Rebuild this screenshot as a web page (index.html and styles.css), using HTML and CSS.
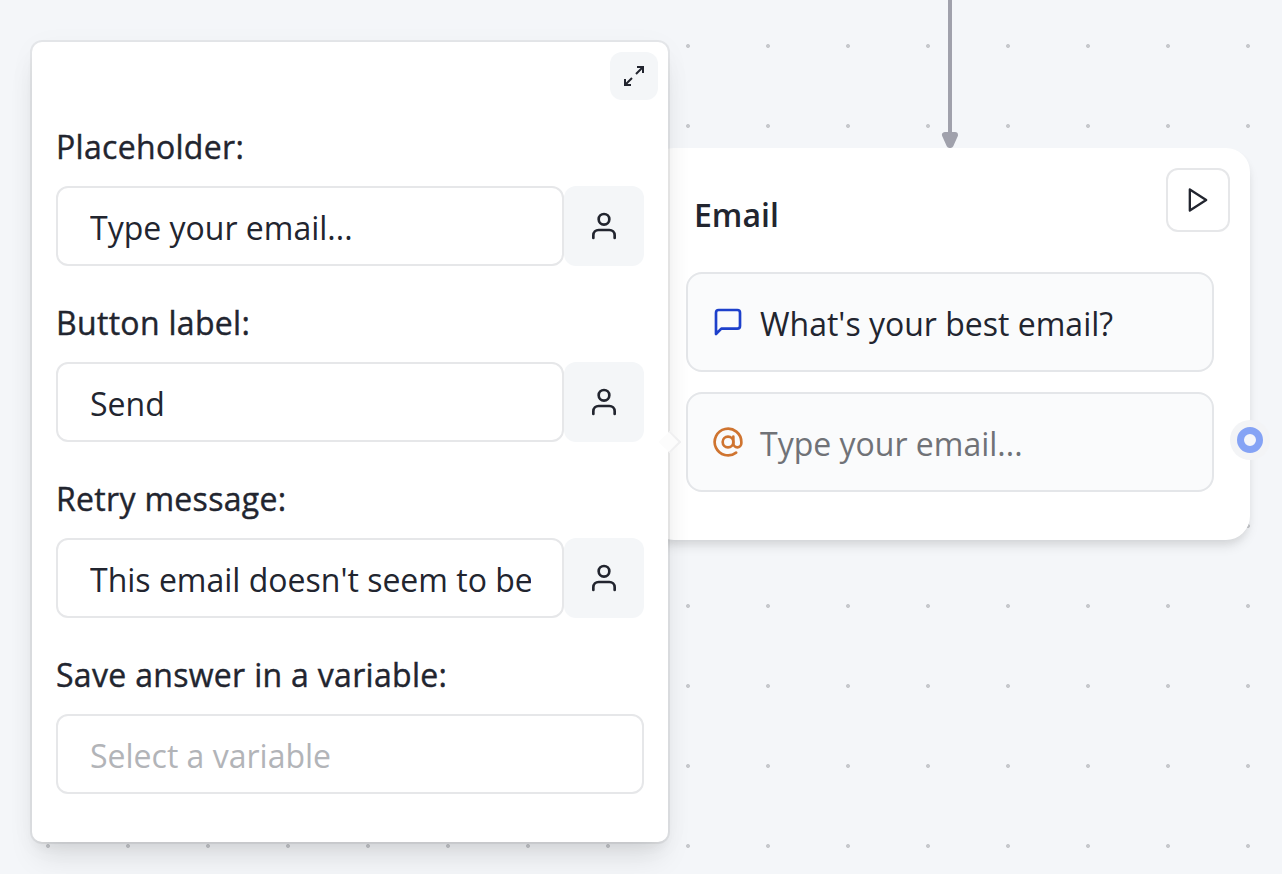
FILE: index.html
```html
<!DOCTYPE html>
<html lang="en">
<head>
<meta charset="utf-8">
<title>Email block settings</title>
<link rel="stylesheet" href="styles.css">
</head>
<body>
<svg class="symbols" aria-hidden="true">
  <symbol id="user" viewBox="0 0 24 24"><path d="M20 21v-2a4 4 0 0 0-4-4H8a4 4 0 0 0-4 4v2"/><circle cx="12" cy="7" r="4"/></symbol>
</svg>
<main class="canvas">
  <svg class="edge" viewBox="0 0 20 150"><path class="edge-line" d="M10 0V136"/><path class="edge-head" d="M5 135H15L10.500 145H9.500Z"/></svg>

  <section class="node">
    <header class="node-header">
      <h2 class="node-title">Email</h2>
      <button class="play" aria-label="Preview"><svg class="icon play-icon" viewBox="0 0 24 24"><path d="M5 3L19 12L5 21Z"/></svg></button>
    </header>
    <div class="block">
      <svg class="icon block-icon chat" viewBox="0 0 24 24"><path d="M21 15a2 2 0 0 1-2 2H7l-4 4V5a2 2 0 0 1 2-2h14a2 2 0 0 1 2 2z"/></svg>
      <span>What's your best email?</span>
    </div>
    <div class="block block-input">
      <svg class="icon block-icon at" viewBox="0 0 24 24"><circle cx="12" cy="12" r="4"/><path d="M16 8v5a3 3 0 0 0 6 0v-1a10 10 0 1 0-3.920 7.940"/></svg>
      <span>Type your email...</span>
    </div>
    <span class="endpoint"><span class="endpoint-ring"></span></span>
  </section>

  <section class="popover">
    <span class="popover-arrow"></span>
    <header class="popover-header">
      <button class="expand" aria-label="Expand"><svg class="icon expand-icon" viewBox="0 0 24 24"><path d="M15 3h6v6M9 21H3v-6M21 3l-7 7M3 21l7-7"/></svg></button>
    </header>
    <div class="fields">
      <div class="field">
        <span class="label">Placeholder:</span>
        <div class="row"><div class="input"><span class="value">Type your email...</span></div><button class="variable" aria-label="Insert a variable"><svg class="icon user-icon"><use href="#user"/></svg></button></div>
      </div>
      <div class="field">
        <span class="label">Button label:</span>
        <div class="row"><div class="input"><span class="value">Send</span></div><button class="variable" aria-label="Insert a variable"><svg class="icon user-icon"><use href="#user"/></svg></button></div>
      </div>
      <div class="field">
        <span class="label">Retry message:</span>
        <div class="row"><div class="input"><span class="value">This email doesn't seem to be</span></div><button class="variable" aria-label="Insert a variable"><svg class="icon user-icon"><use href="#user"/></svg></button></div>
      </div>
      <div class="field">
        <span class="label">Save answer in a variable:</span>
        <div class="row"><div class="input"><span class="value empty">Select a variable</span></div></div>
      </div>
    </div>
  </section>
</main>
</body>
</html>
```
FILE: styles.css
```css
* { box-sizing: border-box; }
body {
  margin: 0;
  font-family: "Open Sans", "Noto Sans", sans-serif;
  font-size: 32px;
  line-height: 48px;
  color: #22252f;
}
button { padding: 0; border: 0; font: inherit; color: inherit; display: flex; align-items: center; justify-content: center; }
.symbols { position: absolute; width: 0; height: 0; }
.icon { fill: none; stroke: currentColor; stroke-width: 2; stroke-linecap: round; stroke-linejoin: round; flex: none; }

.canvas {
  position: relative;
  width: 1282px;
  height: 874px;
  overflow: hidden;
  background-color: #f4f6f9;
  background-image: radial-gradient(circle at 40px 40px, #c7c9cd 1.6px, transparent 2.3px);
  background-size: 80px 80px;
  background-position: 8px 6px;
}

/* Incoming connection */
.edge { position: absolute; left: 940px; top: 0; width: 20px; height: 150px; z-index: 1; }
.edge-line { stroke: #a0a1ac; stroke-width: 4; }
.edge-head { fill: #a0a1ac; stroke: #a0a1ac; stroke-width: 6; stroke-linejoin: round; }

/* Group node */
.node {
  position: absolute;
  left: 650px;
  top: 148px;
  width: 600px;
  height: 392px;
  padding: 20px 36px 48px;
  display: flex;
  flex-direction: column;
  gap: 20px;
  background: #fff;
  border-radius: 24px;
  box-shadow: 0 8px 12px -2px rgba(0, 0, 0, .1), 0 4px 8px -2px rgba(0, 0, 0, .06);
}
.node-header { display: flex; justify-content: space-between; height: 84px; margin-right: -16px; padding-left: 8px; }
.node-title { margin: 23px 0 0; font-size: 32px; line-height: 48px; font-weight: 600; }
.play { width: 64px; height: 64px; background: #fff; border: 2px solid #e6e7e9; border-radius: 12px; }
.play-icon { width: 28px; height: 28px; stroke-width: 2; }
.block {
  height: 100px;
  padding: 0 24px;
  display: flex;
  align-items: center;
  gap: 16px;
  background: #fafbfc;
  border: 2px solid #e4e6e9;
  border-radius: 16px;
}
.block span { margin-top: 4px; }
.block-input { color: #707277; }
.block-icon { width: 32px; height: 32px; }
.chat { color: #1d40cb; }
.at { color: #cf7430; }
.endpoint {
  position: absolute;
  right: -20px;
  top: 272px;
  width: 40px;
  height: 40px;
  display: flex;
  align-items: center;
  justify-content: center;
  border-radius: 50%;
  background: #f3f4f6;
}
.endpoint-ring { width: 26px; height: 26px; border: 7px solid #85a3f5; border-radius: 50%; background: #f5f6fa; }

/* Settings popover */
.popover {
  position: absolute;
  left: 32px;
  top: 42px;
  width: 636px;
  height: 800px;
  background: #fff;
  border-radius: 10px;
  z-index: 2;
  box-shadow: 0 0 0 2px rgba(0, 0, 0, .06), 0 20px 30px -6px rgba(0, 0, 0, .1), 0 8px 12px -4px rgba(0, 0, 0, .05), 0 4px 30px rgba(0, 0, 0, .03);
}
.popover-arrow {
  position: absolute;
  right: -10px;
  top: 392px;
  width: 16px;
  height: 16px;
  background: #fcfcfc;
  border: 2px solid #efeff0;
  border-left: 0;
  border-bottom: 0;
  transform: rotate(45deg);
}
.popover-header { display: flex; justify-content: flex-end; padding: 10px 10px 0; }
.expand { width: 48px; height: 48px; background: #f4f6f8; border-radius: 12px; }
.expand-icon { width: 24px; height: 24px; stroke-linecap: butt; stroke-linejoin: miter; }
.fields { display: flex; flex-direction: column; gap: 33px; padding: 23px 24px 0; }
.field { display: flex; flex-direction: column; gap: 15px; }
.label { letter-spacing: .31px; -webkit-text-stroke: .4px currentColor; }
.row { display: flex; }
.input {
  flex: 1;
  min-width: 0;
  height: 80px;
  padding: 0 31px 0 32px;
  display: flex;
  align-items: center;
  background: #fff;
  border: 2px solid #e6e7e9;
  border-radius: 12px;
}
.value { white-space: nowrap; overflow: hidden; margin-top: 4px; }
.empty { color: #b2b4b8; }
.variable { width: 80px; height: 80px; background: #f4f6f8; border-radius: 12px; }
.user-icon { width: 32px; height: 32px; }
```
